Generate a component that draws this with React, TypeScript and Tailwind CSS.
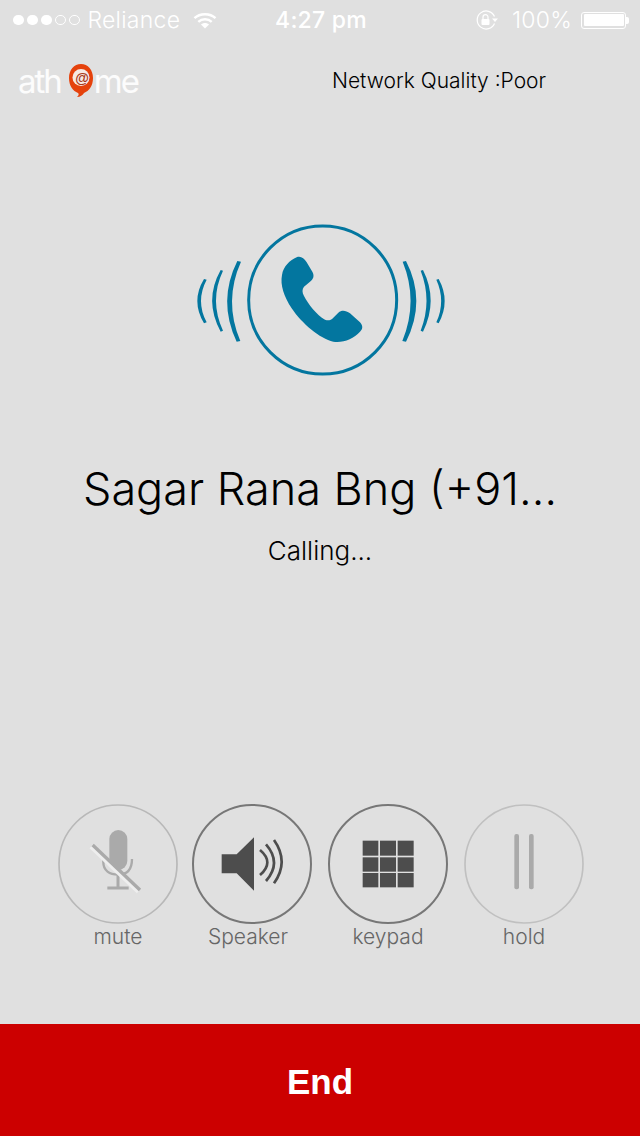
import React from "react";

const light = "font-['Inter','Liberation_Sans',sans-serif] font-light";

// round call control, icon is drawn in a 360 box (120px at 3x)
const RoundButton = ({
  label,
  ring,
  ringWidth,
  labelClass = "",
  children,
}: {
  label: string;
  ring: string;
  ringWidth: number;
  labelClass?: string;
  children: React.ReactNode;
}) => (
  <div className="flex w-[120px] flex-col items-center">
    <svg width="120" height="120" viewBox="0 0 360 360" className="block">
      <circle cx="180" cy="180" r="177" fill="none" stroke={ring} strokeWidth={ringWidth} />
      {children}
    </svg>
    <span className={`${light} h-[26px] w-full text-center text-[21px] leading-[26px] text-[#666666] ${labelClass}`}>
      {label}
    </span>
  </div>
);

const StatusBar = () => (
  <div className={`${light} flex h-10 items-center pl-[13px] pr-[11px] text-[23px] tracking-[0.25px] text-white`}>
    <div className="flex flex-1 items-center">
      <div className="flex gap-[3.5px]">
        <span className="size-[10.5px] rounded-full bg-white" />
        <span className="size-[10.5px] rounded-full bg-white" />
        <span className="size-[10.5px] rounded-full bg-white" />
        <span className="size-[10.5px] rounded-full border border-white" />
        <span className="size-[10.5px] rounded-full border border-white" />
      </div>
      <span className="ml-[8px]">Reliance</span>
      <svg width="24" height="17" viewBox="0 0 24 17" className="ml-[13px]" fill="none" stroke="#fff">
        <path d="M1.5 6.2C7 1 17 1 22.5 6.2" strokeWidth="2.4" />
        <path d="M5.3 9.8C9 6.4 15 6.4 18.7 9.8" strokeWidth="2.4" />
        <path d="M8 12.6L12 16.6L16 12.6C13.6 10.6 10.4 10.6 8 12.6Z" fill="#fff" stroke="none" />
      </svg>
    </div>
    <span className="shrink-0 font-medium">4:27 pm</span>
    <div className="flex flex-1 items-center justify-end">
      <svg width="24" height="20" viewBox="0 0 24 20" fill="none" stroke="#fff" strokeWidth="1.2">
        <path d="M19.5 6.5A9 9 0 1 0 19.5 13.5" />
        <path d="M17 8.5H23L20 12Z" fill="#fff" stroke="none" />
        <rect x="6.5" y="9" width="8" height="6" rx="1" fill="#fff" stroke="none" />
        <path d="M8 9V7.2a2.5 2.5 0 0 1 5 0V9" />
      </svg>
      <span className="ml-[13px]">100%</span>
      <div className="ml-[9px] flex items-center">
        <div className="h-[17px] w-[45px] rounded-[3px] border border-white p-[1.5px]">
          <div className="h-full w-full rounded-[1px] bg-white" />
        </div>
        <div className="h-[7px] w-[3px] rounded-r-[2px] bg-white" />
      </div>
    </div>
  </div>
);

const Logo = () => (
  <div className="flex w-[120px] items-center font-['Inter',sans-serif] text-[33px] font-normal leading-none tracking-[-2px] text-white/90">
    <span className="w-[50px]">ath</span>
    <svg width="26" height="36" viewBox="0 0 26 36" className="shrink-0">
      <path d="M13 1C20 1 25 7 25 15C25 23 21 28 16 30C15 32 12 34 9 34C11 32 11 31 10 30C5 28 1 23 1 15C1 7 6 1 13 1Z" fill="#e5420c" />
      <circle cx="13" cy="14.5" r="8.5" fill="#f6e9e4" />
      <text x="13" y="19.5" textAnchor="middle" fontSize="14" fontWeight="700" fill="#a8391c" fontFamily="Liberation Sans">
        @
      </text>
    </svg>
    <span>me</span>
  </div>
);

const CallingIcon = () => (
  <svg width="280" height="170" viewBox="0 0 840 510" className="mx-auto block" fill="#03769f">
    <circle cx="428" cy="255" r="222" fill="none" stroke="#03769f" strokeWidth="9" />
    <path d="M350 127C362 122 372 130 380 142L397 170C404 183 400 192 390 200L372 215C366 222 366 232 372 243C385 268 410 300 435 314C445 318 452 316 460 308L475 293C485 285 497 286 510 295L540 322C549 332 549 342 540 350C520 372 490 384 460 380C420 372 365 325 335 280C312 245 300 210 306 180C310 155 330 135 350 127Z" />
    {/* left waves */}
    <path d="M172 138Q112 258 170 380L181 378Q130 258 183 140Z" />
    <path d="M122 165Q71 256 122 350L129 347Q87 256 129 167Z" />
    <path d="M72 192Q32 258 72 325L80 322Q46 258 80 194Z" />
    {/* right waves */}
    <path d="M668 140Q716 258 667 378L678 380Q740 258 678 138Z" />
    <path d="M722 167Q757 256 722 347L729 350Q775 256 729 165Z" />
    <path d="M769 194Q798 258 769 322L776 325Q812 258 776 192Z" />
  </svg>
);

export default function App() {
  return (
    <div className="flex h-[1136px] w-[640px] flex-col overflow-hidden bg-[#e0e0e0]">
      <StatusBar />

      <div className="flex h-[82px] items-center pl-[18px]">
        <Logo />
        <span className={`${light} ml-[194px] text-[21px] text-black`}>Network Quality :Poor</span>
      </div>

      <div className="mt-[93px]">
        <CallingIcon />
      </div>

      <h1 className={`${light} mt-[78px] text-center text-[45px] leading-[52px] text-black`}>
        Sagar Rana Bng (+91…
      </h1>
      <p className={`${light} mt-[21px] text-center text-[26px] leading-[30px] text-black`}>Calling...</p>

      <div className="mb-[74px] mt-auto flex pl-[58px]">
        <RoundButton label="mute" ring="#b8b8b8" ringWidth={5}>
          <g fill="none" stroke="#aaaaaa">
            <rect x="154" y="78" width="54" height="120" rx="27" fill="#aaaaaa" stroke="none" />
            <path d="M136 165V175C136 200 155 212 180 212C205 212 222 200 222 165" strokeWidth="7" />
            <path d="M180 212V250" strokeWidth="9" />
            <path d="M148 252H212" strokeWidth="9" />
            <path d="M100 127L242 262" stroke="#eeeeee" strokeWidth="16" />
            <path d="M104 123L246 258" strokeWidth="10" />
          </g>
        </RoundButton>
        <div className="ml-[14px]">
          <RoundButton label="Speaker" ring="#777777" ringWidth={6} labelClass="pr-2">
            <path d="M89 151H134L186 100V260L134 208H89Z" fill="#4d4d4d" />
            <g fill="none" stroke="#4d4d4d" strokeWidth="8">
              <path d="M204 138Q248 175 204 213" />
              <path d="M222 121Q270 176 222 231" />
              <path d="M246 108Q292 173 246 238" />
            </g>
          </RoundButton>
        </div>
        <div className="ml-4">
          <RoundButton label="keypad" ring="#777777" ringWidth={6}>
            <g fill="#4d4d4d">
              <rect x="104" y="110" width="47" height="45" />
              <rect x="156" y="110" width="48" height="45" />
              <rect x="209" y="110" width="48" height="45" />
              <rect x="104" y="160" width="47" height="43" />
              <rect x="156" y="160" width="48" height="43" />
              <rect x="209" y="160" width="48" height="43" />
              <rect x="104" y="207" width="47" height="43" />
              <rect x="156" y="207" width="48" height="43" />
              <rect x="209" y="207" width="48" height="43" />
            </g>
          </RoundButton>
        </div>
        <div className="ml-4">
          <RoundButton label="hold" ring="#c0c0c0" ringWidth={5}>
            <rect x="151" y="90" width="14" height="166" rx="6" fill="#aaaaaa" />
            <rect x="195" y="90" width="14" height="166" rx="6" fill="#aaaaaa" />
          </RoundButton>
        </div>
      </div>

      <button className="flex h-[112px] w-full items-center justify-center bg-[#cc0000] pt-1 font-['Liberation_Sans',sans-serif] text-[35px] font-bold text-white">
        End
      </button>
    </div>
  );
}
